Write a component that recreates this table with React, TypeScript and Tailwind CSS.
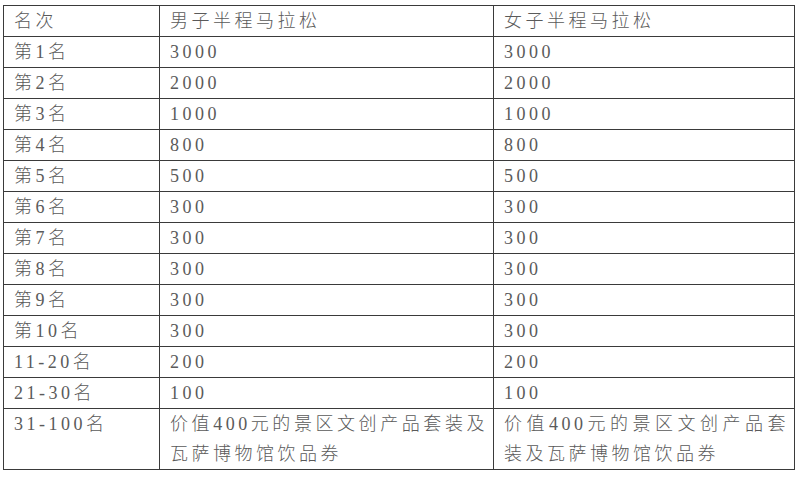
import React from "react";

const rows: [string, string, string][] = [
  ["第1名", "3000", "3000"],
  ["第2名", "2000", "2000"],
  ["第3名", "1000", "1000"],
  ["第4名", "800", "800"],
  ["第5名", "500", "500"],
  ["第6名", "300", "300"],
  ["第7名", "300", "300"],
  ["第8名", "300", "300"],
  ["第9名", "300", "300"],
  ["第10名", "300", "300"],
  ["11-20名", "200", "200"],
  ["21-30名", "100", "100"],
  ["31-100名", "价值400元的景区文创产品套装及瓦萨博物馆饮品券", "价值400元的景区文创产品套装及瓦萨博物馆饮品券"],
];

const cell =
  "border border-[#3a3a3a] pl-[10px] pr-[5px] py-0 align-top text-justify leading-[30px] break-all";

export default function App() {
  return (
    <div
      className="w-[800px] h-[478px] bg-white pt-[5px] pl-[3px] text-[#5a5a5a] text-[18px] font-light tracking-[3.5px]"
      style={{ fontFamily: '"Liberation Serif", "Noto Sans CJK SC", serif' }}
    >
      <table className="table-fixed border-collapse w-[791px]">
        <colgroup>
          <col className="w-[156px]" />
          <col className="w-[334px]" />
          <col className="w-[301px]" />
        </colgroup>
        <tbody>
          <tr>
            <td className={cell}>名次</td>
            <td className={cell}>男子半程马拉松</td>
            <td className={cell}>女子半程马拉松</td>
          </tr>
          {rows.map((r, i) => (
            <tr key={i}>
              <td className={cell}>{r[0]}</td>
              <td className={cell}>{r[1]}</td>
              <td className={cell}>{r[2]}</td>
            </tr>
          ))}
        </tbody>
      </table>
    </div>
  );
}
